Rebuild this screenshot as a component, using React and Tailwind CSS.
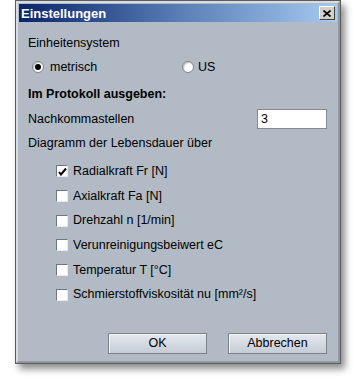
import React, { useState } from 'react'

const DIAGRAMS = [
  { label: 'Radialkraft Fr [N]', checked: true },
  { label: 'Axialkraft Fa [N]', checked: false },
  { label: 'Drehzahl n [1/min]', checked: false },
  { label: 'Verunreinigungsbeiwert eC', checked: false },
  { label: 'Temperatur T [°C]', checked: false },
  { label: 'Schmierstoffviskosität nu [mm²/s]', checked: false },
]

function Radio({ checked }) {
  return (
    <span className="w-[12px] h-[12px] rounded-full bg-white border border-[#7d848c] shadow-[inset_1px_1px_1px_rgba(0,0,0,0.25)] flex items-center justify-center">
      {checked && <span className="w-[6px] h-[6px] rounded-full bg-black" />}
    </span>
  )
}

function Check({ checked }) {
  return (
    <span className="w-[12px] h-[12px] bg-white border border-t-[#6e757d] border-l-[#6e757d] border-r-[#e6eaee] border-b-[#e6eaee] flex items-center justify-center">
      {checked && (
        <svg width="9" height="9" viewBox="0 0 9 9">
          <path d="M1 5 L3 7.5 L8 1.5" stroke="#000" strokeWidth="2" fill="none" />
        </svg>
      )}
    </span>
  )
}

function Button({ children }) {
  return (
    <button className="w-[99px] h-[21px] border border-[#7a8189] bg-gradient-to-b from-[#e4e8ee] to-[#c4ccd5] shadow-[inset_1px_1px_0_#f4f6f8] text-[12.5px] text-black leading-none">
      {children}
    </button>
  )
}

export default function App() {
  const [items, setItems] = useState(DIAGRAMS)

  return (
    <div className="w-[356px] h-[381px] bg-white" style={{ fontFamily: '"Liberation Sans", Arial, sans-serif' }}>
      <div className="ml-[15px] w-[326px] h-[364px] border border-[#5c5c5c] bg-[#b2bbc5] shadow-[4px_5px_7px_rgba(0,0,0,0.45)] flex flex-col">
        <div className="flex-1 border-2 border-[#d8dde3] border-r-[#8f979f] border-b-[#8f979f] flex flex-col">
          {/* Title bar */}
          <div className="h-[18px] mx-[1px] mt-[1px] bg-gradient-to-r from-[#0a246a] via-[#5a7db5] to-[#a6caf0] flex items-center justify-between pl-[2px] pr-[2px]">
            <span className="text-white font-bold text-[13px] leading-none">Einstellungen</span>
            <span className="w-[16px] h-[14px] bg-[#d4d0c8] border border-t-white border-l-white border-r-[#404040] border-b-[#404040] flex items-center justify-center">
              <svg width="8" height="7" viewBox="0 0 8 7">
                <path d="M0.5 0.5 L7.5 6.5 M7.5 0.5 L0.5 6.5" stroke="#000" strokeWidth="1.6" />
              </svg>
            </span>
          </div>

          {/* Content */}
          <div className="flex flex-col text-[12.5px] text-black pl-[10px] pr-[11px]">
            <div className="h-[24px] mt-[9px] flex items-center">Einheitensystem</div>
            <div className="h-[24px] flex items-center">
              <div className="w-[154px] pl-[4px] flex items-center gap-[6px]">
                <Radio checked />
                <span>metrisch</span>
              </div>
              <div className="flex items-center gap-[4px]">
                <Radio />
                <span>US</span>
              </div>
            </div>
            <div className="h-[26px] mt-[2px] flex items-center font-bold">Im Protokoll ausgeben:</div>
            <div className="h-[24px] flex items-center justify-between">
              <span>Nachkommastellen</span>
              <span className="w-[70px] h-[20px] bg-white border border-[#828a93] flex items-center pl-[3px]">3</span>
            </div>
            <div className="h-[24px] flex items-center">Diagramm der Lebensdauer über</div>
            <div className="flex flex-col pl-[28px] mt-[4px]">
              {items.map((it, i) => (
                <div
                  key={it.label}
                  className="h-[24.7px] flex items-center gap-[5px]"
                  onClick={() => setItems(prev => prev.map((p, j) => (j === i ? { ...p, checked: !p.checked } : p)))}
                >
                  <Check checked={it.checked} />
                  <span>{it.label}</span>
                </div>
              ))}
            </div>
            <div className="flex justify-end gap-[21px] mt-[26px]">
              <Button>OK</Button>
              <Button>Abbrechen</Button>
            </div>
          </div>
        </div>
      </div>
    </div>
  )
}
